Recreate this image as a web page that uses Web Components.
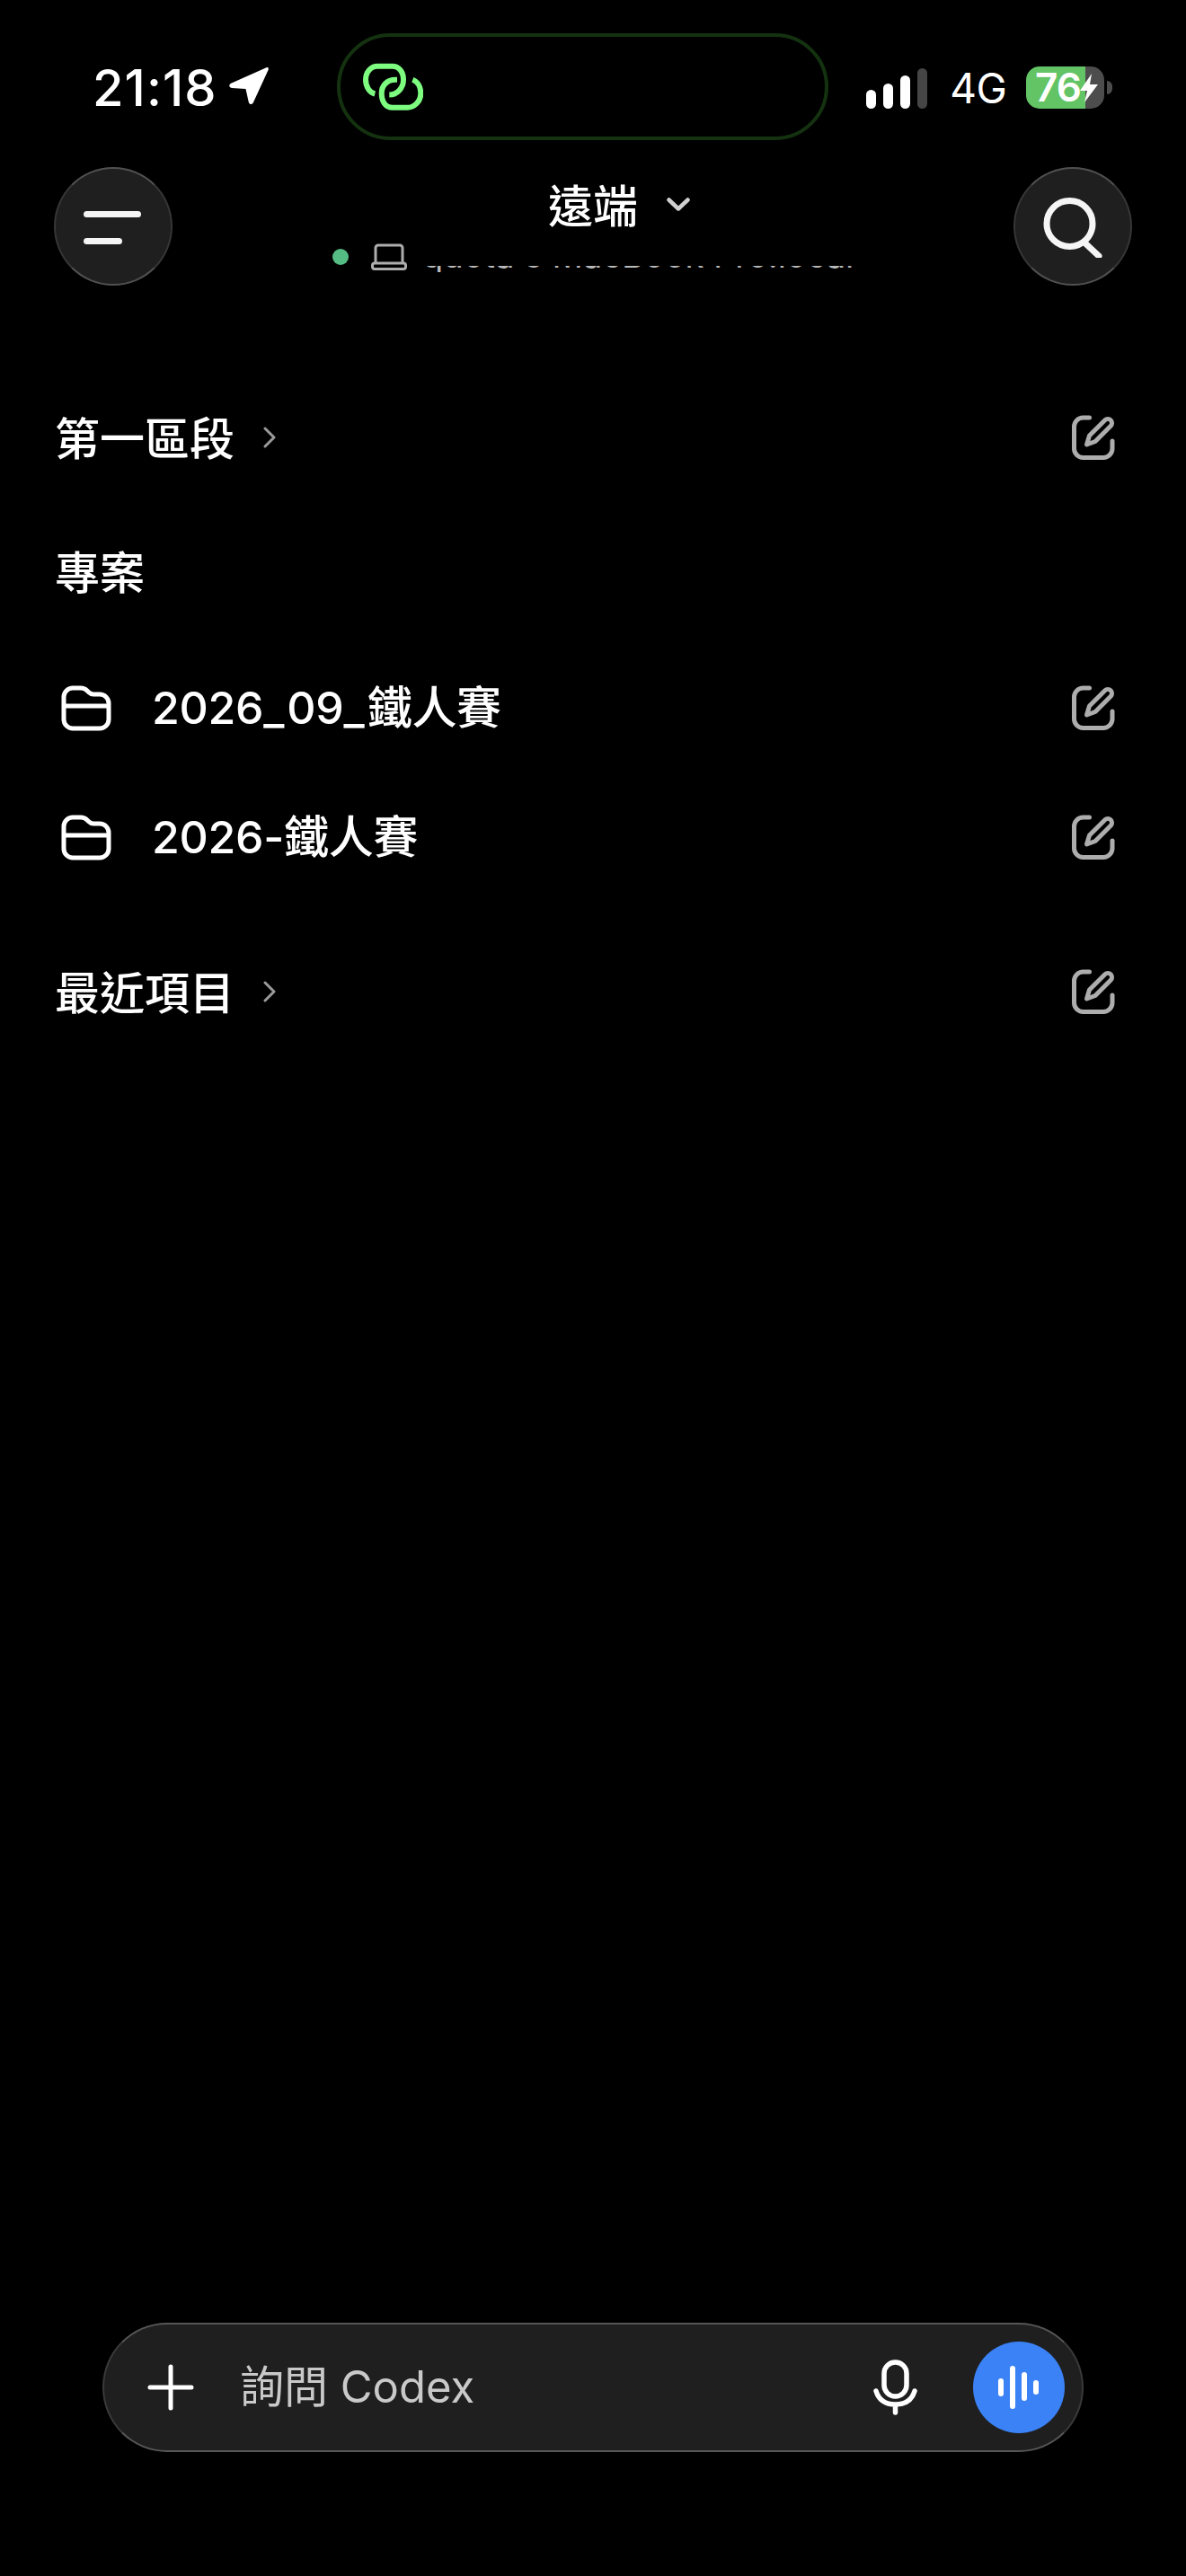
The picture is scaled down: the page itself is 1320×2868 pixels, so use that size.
<!DOCTYPE html>
<html lang="zh-Hant">
<head>
<meta charset="utf-8">
<title>Codex</title>
<style>
  html, body { margin: 0; padding: 0; background: #000; }
  body {
    width: 1320px;
    height: 2868px;
    overflow: hidden;
    display: flex;
    flex-direction: column;
    color: #fff;
    font-family: Inter, "Noto Sans CJK TC", sans-serif;
  }
  .sections { display: flex; flex-direction: column; flex: 1; padding-top: 124px; }
  .us { letter-spacing: 3px; }
</style>
</head>
<body>
<status-bar></status-bar>
<top-nav></top-nav>
<div class="sections">
  <section-row>第一區段</section-row>
  <section-row style="margin-top:59px" plain>專案</section-row>
  <project-row style="margin-top:62px">2026<span class="us">_</span>09<span class="us">_</span>鐵人賽</project-row>
  <project-row style="margin-top:54px">2026-鐵人賽</project-row>
  <section-row style="margin-top:82px">最近項目</section-row>
</div>
<ask-bar></ask-bar>

<script>
const EDIT_ICON = `<svg width="50" height="50" viewBox="0 0 50 50" fill="none" stroke="#adadad" stroke-width="5" stroke-linecap="round" stroke-linejoin="round">
  <path d="M20.500 3H13.500a10 10 0 0 0-10 10v24.500a10 10 0 0 0 10 10H36a10 10 0 0 0 10-10V29"/>
  <path d="M37.800 5.800a4.500 4.500 0 0 1 6.400 6.400L27 29.500 17.500 33 20.500 23z"/>
</svg>`;

class StatusBar extends HTMLElement {
  constructor() {
    super();
    this.attachShadow({mode: "open"}).innerHTML = `
      <style>
        :host { display: block; height: 186px; box-sizing: border-box; padding: 37px 82px 0 104px; }
        .bar { display: flex; align-items: flex-start; }
        .time { font: 500 56px/56px Inter, sans-serif; letter-spacing: 1.100px; margin: 33px 0 0 -1px; width: 147px; }
        .arrow { margin: 37px 0 0 5px; }
        .island {
          box-sizing: border-box; width: 548px; height: 119px; margin-left: 76px;
          border: 4px solid #143210; border-radius: 60px;
          display: flex; align-items: center; padding-left: 24px;
        }
        .signal { display: flex; align-items: flex-end; gap: 8px; margin: 39px 0 0 42px; }
        .signal i { display: block; width: 11px; border-radius: 6px; background: #fff; }
        .net { font: 400 46px/46px Inter, sans-serif; margin: 38px 0 0 25px; width: 85px; letter-spacing: -.5px; }
        .battery {
          position: relative; width: 87px; height: 47px; margin-top: 37px; border-radius: 15px;
          background: linear-gradient(90deg, #63c466 0 66px, #4d4d4d 66px); color: #fff;
          font: 600 44px/47px Inter, sans-serif;
        }
        .battery span { position: absolute; left: 10px; top: 0; letter-spacing: -1px; }
        .battery svg { position: absolute; left: 60px; top: 8px; }
        .cap { width: 6px; height: 15px; margin: 53px 0 0 3px; background: #4d4d4d; border-radius: 0 8px 8px 0; }
      </style>
      <div class="bar">
        <div class="time">21:18</div>
        <svg class="arrow" width="44" height="44" viewBox="0 0 44 44"><path fill="#fff" d="M41.500 1.200c1.500-.6 2.800.6 2.300 2.200L27 40c-.9 2.800-4.500 2.600-5.200-.3L18.500 25 3 24c-3.200-.3-3.800-4-.8-5.300z"/></svg>
        <div class="island">
          <svg width="68" height="54" viewBox="0 0 68 54" fill="none" stroke="#7dfc80" stroke-width="6">
            <path d="M14.300 34.500C8 33 4 26 4 18.800 4 10 10 3.800 17 3.800H33.700C41 3.800 46 10 46 18.800 46 28 39 35.500 30.300 35.500"/>
            <path d="M56.300 18.800C62 21 65.300 27 65.300 33.800 65.300 43 58 49.800 50.300 49.800H33.700C26 49.800 21.700 43 21.700 33.800 21.700 25 28 18.800 37 18.800H39"/>
          </svg>
        </div>
        <div class="signal">
          <i style="height:21px"></i><i style="height:28px"></i><i style="height:37px"></i><i style="height:45px;background:#454545"></i>
        </div>
        <div class="net">4G</div>
        <div class="battery"><span>76</span>
          <svg width="20" height="32" viewBox="0 0 20 32"><path fill="#fff" d="M13 0 0 19h8L5 32 20 12h-9z"/></svg>
        </div>
        <div class="cap"></div>
      </div>`;
  }
}

class RoundButton extends HTMLElement {
  constructor() {
    super();
    this.attachShadow({mode: "open"}).innerHTML = `
      <style>
        :host {
          display: flex; align-items: center; justify-content: center;
          box-sizing: border-box; width: 132px; height: 132px; border-radius: 50%;
          background: #1f1f1f; border: 2px solid #363636;
          border-top-color: #505050; border-bottom-color: #505050;
        }
        ::slotted(svg) { margin-top: 3px; }
      </style>
      <slot></slot>`;
  }
}

class TopNav extends HTMLElement {
  constructor() {
    super();
    this.attachShadow({mode: "open"}).innerHTML = `
      <style>
        :host { display: flex; justify-content: space-between; padding: 0 60px; height: 132px; position: relative; }
        .title {
          position: absolute; left: 610px; top: 10px; display: flex; align-items: center;
          font: 500 50px/60px "Noto Sans CJK TC", sans-serif;
        }
        .title svg { margin: 3px 0 0 32px; }
        .device { position: absolute; left: 370px; top: 85px; display: flex; align-items: flex-start; }
        .dot { width: 18px; height: 18px; border-radius: 50%; background: #55bd84; margin-top: 6px; }
        .laptop { margin-left: 25px; }
        .clip { margin-left: 17px; width: 478px; height: 36px; overflow: hidden; position: relative; }
        .clip span {
          position: absolute; left: 0; top: -6px; white-space: nowrap;
          font: 400 38px/38px Inter, sans-serif; color: #b9b9b9;
          clip-path: inset(31px 0 0 0);
        }
      </style>
      <round-button>
        <svg width="66" height="37" viewBox="0 0 66 37" fill="#f5f5f5"><rect width="64" height="7" rx="3.500"/><rect y="30" width="43" height="7" rx="3.500"/></svg>
      </round-button>
      <div class="title">遠端
        <svg width="26" height="15" viewBox="0 0 26 15" fill="none" stroke="#d0d0d0" stroke-width="4.500" stroke-linecap="round" stroke-linejoin="round"><path d="M2.500 2.500 13 12.500 23.500 2.500"/></svg>
      </div>
      <div class="device">
        <div class="dot"></div>
        <svg class="laptop" width="40" height="30" viewBox="0 0 40 30" fill="none" stroke="#adadad" stroke-width="3"><path d="M5 22V5a3 3 0 0 1 3-3h24a3 3 0 0 1 3 3v17"/><rect x="1.500" y="22" width="37" height="6.500" rx="2.500"/></svg>
        <div class="clip"><span>quota's MacBook Pro.local</span></div>
      </div>
      <round-button>
        <svg width="66" height="67" viewBox="0 0 66 67" fill="none" stroke="#f5f5f5" stroke-width="7" stroke-linecap="round"><circle cx="29.500" cy="29" r="25.500"/><path d="M47 51 62 65"/></svg>
      </round-button>`;
  }
}

class SectionRow extends HTMLElement {
  constructor() {
    super();
    const plain = this.hasAttribute("plain");
    this.attachShadow({mode: "open"}).innerHTML = `
      <style>
        :host { display: flex; align-items: center; height: 90px; padding: 0 78px 0 61px; }
        .label { font: 500 50px/60px "Noto Sans CJK TC", sans-serif; margin-bottom: 4px; }
        .chev { margin-left: 32px; }
        .edit { margin-left: auto; display: flex; }
      </style>
      <div class="label"><slot></slot></div>
      ${plain ? "" : `<svg class="chev" width="14" height="24" viewBox="0 0 14 24" fill="none" stroke="#9a9a9a" stroke-width="3" stroke-linecap="round" stroke-linejoin="round"><path d="M2 2 12 12 2 22"/></svg>
      <div class="edit">${EDIT_ICON}</div>`}`;
  }
}

class ProjectRow extends HTMLElement {
  constructor() {
    super();
    this.attachShadow({mode: "open"}).innerHTML = `
      <style>
        :host { display: flex; align-items: center; height: 90px; padding: 0 78px 0 68px; }
        .folder { flex: none; }
        .label { margin-left: 45px; font: 500 50px/60px Inter, "Noto Sans CJK TC", sans-serif; letter-spacing: -.3px; white-space: nowrap; }
        .edit { margin-left: auto; display: flex; }
      </style>
      <svg class="folder" width="56" height="52" viewBox="0 0 56 52" fill="none" stroke="#fff" stroke-width="5" stroke-linejoin="round">
        <path d="M3 14a10 10 0 0 1 10-10h9c3 0 5 1 7 3l1.500 1.500c1.500 1.500 3 2.500 5.500 2.500h7a10 10 0 0 1 10 10v18a10 10 0 0 1-10 10H13A10 10 0 0 1 3 39z"/>
        <path d="M3 24H53"/>
      </svg>
      <div class="label"><slot></slot></div>
      <div class="edit">${EDIT_ICON}</div>`;
  }
}

class AskBar extends HTMLElement {
  constructor() {
    super();
    this.attachShadow({mode: "open"}).innerHTML = `
      <style>
        :host { display: block; padding: 0 114px 138px; }
        .pill {
          box-sizing: border-box; height: 144px; border-radius: 72px; background: #1f1f1f;
          border: 2px solid #3a3a3a; border-top-color: #565656; border-bottom-color: #565656;
          display: flex; align-items: center; padding: 0 19px 0 48px;
        }
        .hint { margin-left: 51px; font: 400 49px/60px Inter, "Noto Sans CJK TC", sans-serif; color: #c9c9c9; }
        .mic { margin-left: auto; }
        .voice {
          width: 102px; height: 102px; border-radius: 50%; background: #3b82f6; margin-left: 62px;
          display: flex; align-items: center; justify-content: center;
        }
      </style>
      <div class="pill">
        <svg width="52" height="52" viewBox="0 0 52 52" fill="none" stroke="#fff" stroke-width="5" stroke-linecap="round"><path d="M26 3v46M3 26h46"/></svg>
        <div class="hint">詢問 Codex</div>
        <svg class="mic" width="49" height="62" viewBox="0 0 49 62" fill="none" stroke="#fff" stroke-width="5.500" stroke-linecap="round"><rect x="12" y="3" width="25" height="38" rx="12.500"/><path d="M3 35c3 10 11 15 21.500 15S43 45 46 35M24.500 50v9"/></svg>
        <div class="voice">
          <svg width="46" height="48" viewBox="0 0 46 48" fill="#fff"><rect x="0" y="14" width="6" height="20" rx="3"/><rect x="13" y="0" width="6" height="48" rx="3"/><rect x="26" y="7" width="6" height="32" rx="3"/><rect x="39" y="16" width="6" height="16" rx="3"/></svg>
        </div>
      </div>`;
  }
}

customElements.define("status-bar", StatusBar);
customElements.define("round-button", RoundButton);
customElements.define("top-nav", TopNav);
customElements.define("section-row", SectionRow);
customElements.define("project-row", ProjectRow);
customElements.define("ask-bar", AskBar);
</script>
</body>
</html>
